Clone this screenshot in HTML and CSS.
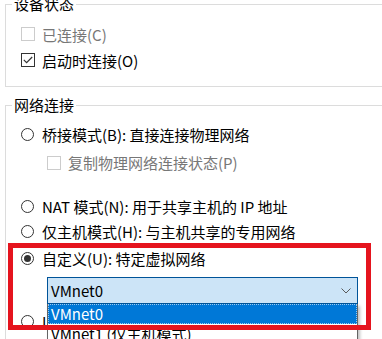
FILE: index.html
```html
<!DOCTYPE html>
<html lang="zh-CN">
<head>
<meta charset="utf-8">
<title>网络适配器</title>
<link rel="stylesheet" href="styles.css">
</head>
<body>
<div class="page">
  <fieldset class="group group-device">
    <legend>设备状态</legend>
    <div class="group-body">
      <div class="row tall disabled"><span class="check"></span><span>已连接(C)</span></div>
      <div class="row tall"><span class="check checked"><svg width="10" height="8" viewBox="0 0 10 8"><polyline points="0.8,3.8 3.6,6.6 9.2,1" fill="none" stroke="#333" stroke-width="1.2"/></svg></span><span>启动时连接(O)</span></div>
    </div>
  </fieldset>

  <fieldset class="group group-net">
    <legend>网络连接</legend>
    <div class="group-body">
      <div class="row r-bridge"><span class="radio"></span><span>桥接模式(B): 直接连接物理网络</span></div>
      <div class="row sub disabled r-copy"><span class="check"></span><span>复制物理网络连接状态(P)</span></div>
      <div class="row r-nat"><span class="radio"></span><span>NAT 模式(N): 用于共享主机的 IP 地址</span></div>
      <div class="row r-host"><span class="radio"></span><span>仅主机模式(H): 与主机共享的专用网络</span></div>
      <div class="row r-custom"><span class="radio on"></span><span>自定义(U): 特定虚拟网络</span></div>
      <div class="combo-wrap">
        <div class="combo">
          <span>VMnet0</span>
          <svg class="chev" width="10" height="6" viewBox="0 0 10 6"><polyline points="0.5,0.5 5,5 9.5,0.5" fill="none" stroke="#5a5a5a" stroke-width="1"/></svg>
        </div>
        <ul class="list">
          <li class="sel">VMnet0</li>
          <li>VMnet1 (仅主机模式)</li>
          <li>VMnet2</li>
        </ul>
      </div>
      <div class="row r-lan"><span class="radio"></span><span>LAN 区段(L):</span></div>
    </div>
  </fieldset>

  <div class="annot"></div>
</div>
</body>
</html>
```

FILE: styles.css
```css
html, body {
  margin: 0;
  padding: 0;
  background: #fff;
}

body {
  width: 382px;
  height: 339px;
  overflow: hidden;
  font-family: "Noto Sans CJK SC", "Noto Sans", sans-serif;
  font-size: 15px;
  color: #000;
}

.page {
  position: relative;
  display: flow-root;
  height: 339px;
  overflow: hidden;
}

.group {
  margin: 0 0 0 5px;
  width: 430px;
  min-width: 0;
  box-sizing: border-box;
  border: 1px solid #dcdcdc;
  padding: 0 0 0 6px;
}

.group legend {
  padding: 0 2px;
  height: 20px;
  line-height: 20px;
  font-size: 15px;
}

.group-body {
  padding-left: 9px;
}

.group-device {
  margin-top: -6px;
  padding-top: 7px;
  padding-bottom: 13px;
}

.group-net {
  margin-top: 8px;
  padding-top: 7px;
  height: 280px;
}

.row {
  display: flex;
  align-items: center;
  height: 25px;
  white-space: nowrap;
}

.row.tall {
  height: 26px;
}

.row.disabled {
  color: #777;
}

.row.sub {
  padding-left: 26px;
}

.r-copy { margin-top: 3px; }
.r-nat { margin-top: 19px; }
.r-custom { margin-top: 2px; }
.r-lan { margin-top: 5px; }

.check {
  width: 14px;
  height: 14px;
  box-sizing: border-box;
  border: 1px solid #333;
  margin-right: 7px;
  background: #fff;
  display: flex;
  align-items: center;
  justify-content: center;
  flex: none;
}

.disabled .check {
  border-color: #cccccc;
}

.radio {
  width: 13px;
  height: 13px;
  box-sizing: border-box;
  border: 1px solid #333;
  border-radius: 50%;
  margin-right: 8px;
  display: flex;
  align-items: center;
  justify-content: center;
  flex: none;
}

.radio.on::after {
  content: "";
  width: 7px;
  height: 7px;
  border-radius: 50%;
  background: #333;
}

.combo-wrap {
  position: relative;
  margin: 6px 0 0 26px;
  width: 311px;
}

.combo {
  height: 27px;
  box-sizing: border-box;
  border: 1px solid #005499;
  background: #cce4f7;
  display: flex;
  align-items: center;
  justify-content: space-between;
  padding: 0 6px 0 3px;
}

.chev {
  display: block;
}

.list {
  position: absolute;
  left: 0;
  top: 100%;
  width: 311px;
  box-sizing: border-box;
  margin: 0;
  padding: 0;
  list-style: none;
  background: #fff;
  border: 1px solid #646464;
  border-top: 0;
  box-shadow: 2px 2px 3px rgba(0, 0, 0, 0.25);
  z-index: 2;
}

.list li {
  height: 20px;
  line-height: 20px;
  padding-left: 3px;
  white-space: nowrap;
}

.list li.sel {
  background: #0078d7;
  color: #fff;
  outline: 1px dotted #9cc9ee;
  outline-offset: -1px;
}

.annot {
  position: absolute;
  left: 8px;
  top: 243px;
  width: 363px;
  height: 87px;
  box-sizing: border-box;
  border: 5px solid #e5141e;
  z-index: 3;
  pointer-events: none;
}
```
